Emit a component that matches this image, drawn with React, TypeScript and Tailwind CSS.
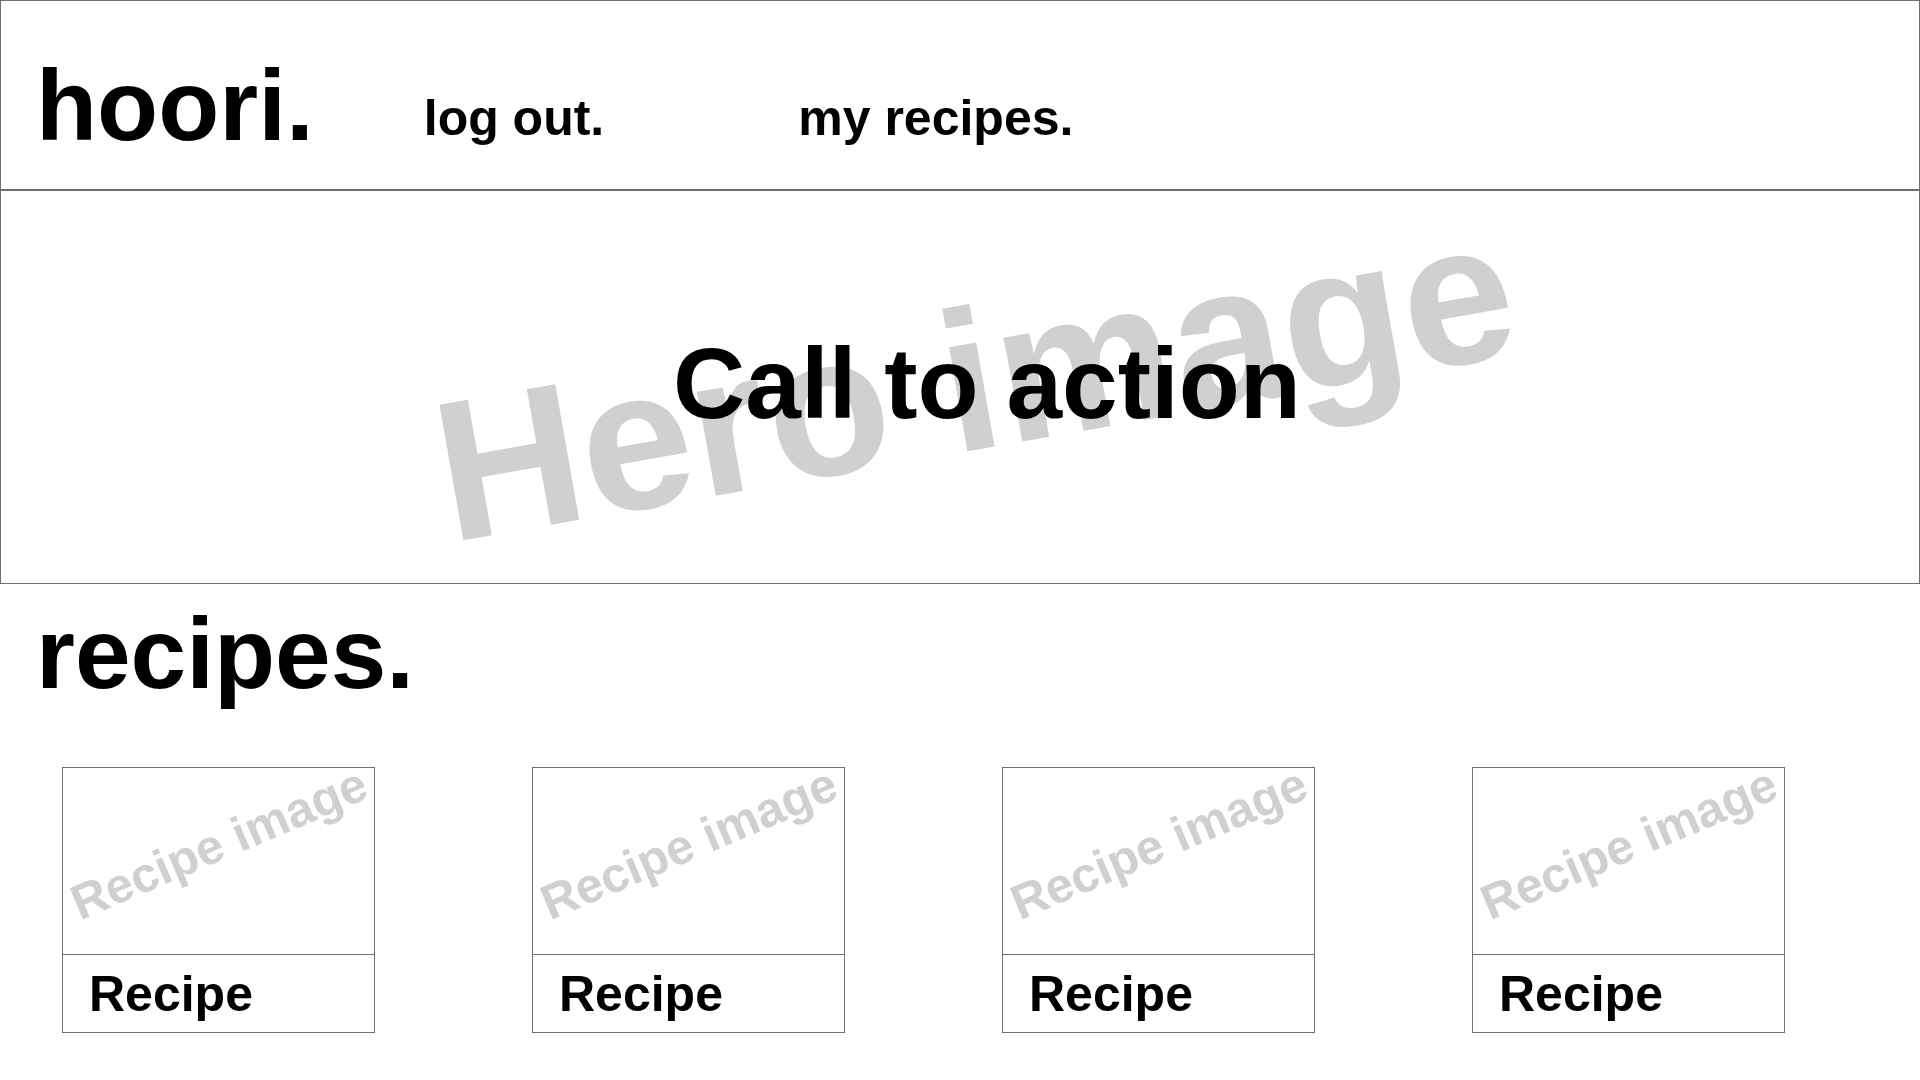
const font = { fontFamily: '"Liberation Sans", Arial, Helvetica, sans-serif' };

function RecipeCard({ title }: { title: string }) {
  return (
    <div className="w-[313px] border border-[#707070] bg-white">
      {/* image placeholder */}
      <div className="relative h-[187px] overflow-hidden border-b border-[#707070]">
        <div className="absolute inset-0 flex items-center justify-center">
          <span className="whitespace-nowrap text-[49px] font-bold leading-none text-[#d0d0d0] -translate-y-[18px] -rotate-[23deg]">
            Recipe image
          </span>
        </div>
      </div>
      <div className="flex h-[77px] items-center pl-[26px]">
        <span className="text-[50px] font-bold leading-none text-black">{title}</span>
      </div>
    </div>
  );
}

export default function App() {
  const recipes = ["Recipe", "Recipe", "Recipe", "Recipe"];

  return (
    <div className="min-h-screen w-[1920px] bg-white text-black" style={font}>
      {/* Header */}
      <header className="flex h-[190px] items-end border border-[#6e6e6e] pl-[35px] pb-[34px]">
        <div className="text-[100px] font-bold leading-none">hoori.</div>
        <a className="ml-[110px] mb-[12px] text-[50px] font-bold leading-none">log out.</a>
        <a className="ml-[194px] mb-[12px] text-[50px] font-bold leading-none">my recipes.</a>
      </header>

      {/* Hero */}
      <section className="relative flex h-[394px] items-center justify-center overflow-hidden border border-[#6e6e6e] pl-[54px] pb-[9px]">
        <div className="pointer-events-none absolute inset-0 flex items-center justify-center">
          <span className="whitespace-nowrap text-[200px] font-bold leading-none text-[#d0d0d0] translate-x-[15px] -translate-y-[7px] -rotate-[10deg]">
            Hero image
          </span>
        </div>
        <h2 className="relative text-[100px] font-bold leading-none">Call to action</h2>
      </section>

      {/* Recipes */}
      <section className="pl-[36px] pt-[19px]">
        <h1 className="text-[100px] font-bold leading-none">recipes.</h1>
        <div className="mt-[64px] flex gap-[157px] pl-[26px]">
          {recipes.map((r, i) => (
            <RecipeCard key={i} title={r} />
          ))}
        </div>
      </section>
    </div>
  );
}
